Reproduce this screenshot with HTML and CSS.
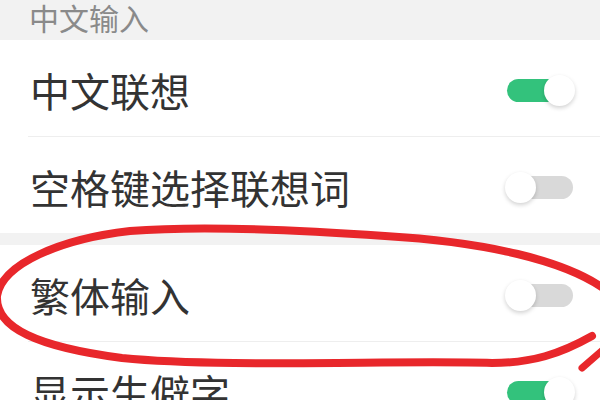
FILE: index.html
```html
<!DOCTYPE html>
<html lang="zh">
<head>
<meta charset="utf-8">
<link rel="stylesheet" href="styles.css">
</head>
<body>
<div class="page">
  <div class="section-title">中文输入</div>
  <div class="group">
    <div class="row">
      <span class="label">中文联想</span>
      <span class="switch on"><span class="knob"></span></span>
    </div>
    <div class="row">
      <span class="label">空格键选择联想词</span>
      <span class="switch"><span class="knob"></span></span>
    </div>
  </div>
  <div class="gap"></div>
  <div class="group">
    <div class="row">
      <span class="label">繁体输入</span>
      <span class="switch"><span class="knob"></span></span>
    </div>
    <div class="row">
      <span class="label">显示生僻字</span>
      <span class="switch on"><span class="knob"></span></span>
    </div>
  </div>
  <svg class="mark" width="600" height="400" viewBox="0 0 600 400">
    <path d="M606 290 C565 260 485 242 385 236 C300 230 205 225 130 231 C60 239 2 264 -3 296 C-5 328 38 347 122 358 C222 368 400 360 492 363 C532 363 560 354 592 336" fill="none" stroke="#e8272b" stroke-width="8" stroke-linecap="round" stroke-linejoin="round"/>
    <path d="M582 368 L604 349" fill="none" stroke="#e8272b" stroke-width="7" stroke-linecap="round"/>
  </svg>
</div>
</body>
</html>
```

FILE: styles.css
```css
html, body {
  margin: 0;
  padding: 0;
  background: #ffffff;
}
.page {
  position: relative;
  width: 600px;
  height: 400px;
  overflow: hidden;
  font-family: "Noto Sans CJK SC", "Noto Sans", sans-serif;
}
.section-title {
  height: 40px;
  line-height: 34px;
  background: #f2f2f2;
  color: #8a8a8a;
  font-size: 30px;
  padding-left: 29px;
  box-sizing: border-box;
}
.group {
  background: #ffffff;
  padding-left: 28px;
}
.row {
  height: 97px;
  box-sizing: border-box;
  border-bottom: 1px solid #eeeeee;
  padding: 4px 27px 0 2px;
  display: flex;
  align-items: center;
  justify-content: space-between;
}
.row:last-child {
  height: 96px;
  border-bottom: none;
}
.label {
  font-size: 40px;
  color: #333333;
  line-height: 48px;
}
.switch {
  position: relative;
  width: 66px;
  height: 23px;
  border-radius: 12px;
  background: #d9d9d9;
}
.switch.on {
  background: #33c27c;
}
.knob {
  position: absolute;
  top: -4px;
  left: -2px;
  width: 31px;
  height: 31px;
  border-radius: 50%;
  background: #ffffff;
  box-shadow: 0 2px 4px rgba(0, 0, 0, 0.18);
}
.switch.on .knob {
  left: auto;
  right: -2px;
}
.gap {
  height: 12px;
  background: #f2f2f2;
}
.mark {
  position: absolute;
  left: 0;
  top: 0;
}
```
